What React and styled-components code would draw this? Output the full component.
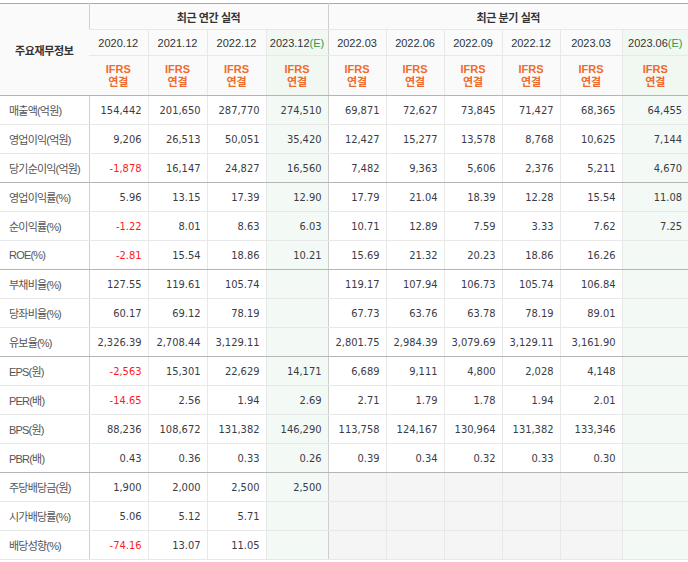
import React from "react"
import styled, {createGlobalStyle} from "styled-components";

const GlobalStyle = createGlobalStyle`
  html, body {
    margin: 0;
    padding: 0;
    background: #fff;
  }
  body {
    font-family: "DejaVu Sans Condensed", "Liberation Sans", "Noto Sans CJK KR", sans-serif;
  }
`

const KR = `"Liberation Sans", "Noto Sans CJK KR", sans-serif`

const Wrap = styled.div`
  padding-top: 3px;
  width: 688px;
`

const Table = styled.table`
  width: 688px;
  table-layout: fixed;
  border-collapse: collapse;
  border-top: 1px solid #a9a9a9;
  border-bottom: 1px solid #b5b5b5;
`

const Th = styled.th`
  height: ${(p) => p.$h || 25}px;
  padding: 0;
  background: ${(p) => (p.$est ? "#f1f8f2" : "#fafafa")};
  border-bottom: 1px solid ${(p) => (p.$last ? "#b5b5b5" : "#e8e8e8")};
  border-left: 1px solid ${(p) => (p.$strong ? "#cfcfcf" : "#e8e8e8")};
  font-family: ${KR};
  font-size: 11px;
  font-weight: ${(p) => (p.$bold ? 700 : 400)};
  letter-spacing: ${(p) => (p.$bold ? "-0.4px" : "0")};
  color: #333;
  text-align: center;
  vertical-align: middle;
  &:first-child {
    border-left: none;
  }
`

const Est = styled.span`
  color: #2f9a4f;
`

const Ifrs = styled.div`
  font-family: ${KR};
  font-size: 11px;
  font-weight: 700;
  line-height: 13px;
  color: #f06a2b;
`

const Row = styled.tr`
  height: 29px;
  td, th {
    border-bottom: 1px solid ${(p) => (p.$sep ? "#b5b5b5" : "#e8e8e8")};
  }
`

const Label = styled.th`
  padding: 0 0 0 9px;
  text-align: left;
  font-family: ${KR};
  font-size: 11px;
  font-weight: 400;
  letter-spacing: -0.8px;
  color: #555;
  background: #fff;
  white-space: nowrap;
`

const Cell = styled.td`
  padding: 0 6px 0 0;
  text-align: right;
  font-size: 11px;
  color: ${(p) => (p.$neg ? "#ff1a1a" : "#3b3b45")};
  background: ${(p) => (p.$est ? "#f3f9f4" : p.$empty ? "#f5f5f5" : "#fff")};
  border-left: 1px solid ${(p) => (p.$strong ? "#cfcfcf" : "#e8e8e8")};
  white-space: nowrap;
`

const annualCols = ["2020.12", "2021.12", "2022.12", "2023.12"]
const quarterCols = ["2022.03", "2022.06", "2022.09", "2022.12", "2023.03", "2023.06"]
const widths = [89, 59, 59, 59, 62, 58, 58, 58, 58, 62, 66]

const rows = [
    ["매출액(억원)", ["154,442", "201,650", "287,770", "274,510"], ["69,871", "72,627", "73,845", "71,427", "68,365", "64,455"]],
    ["영업이익(억원)", ["9,206", "26,513", "50,051", "35,420"], ["12,427", "15,277", "13,578", "8,768", "10,625", "7,144"]],
    ["당기순이익(억원)", ["-1,878", "16,147", "24,827", "16,560"], ["7,482", "9,363", "5,606", "2,376", "5,211", "4,670"], true],
    ["영업이익률(%)", ["5.96", "13.15", "17.39", "12.90"], ["17.79", "21.04", "18.39", "12.28", "15.54", "11.08"]],
    ["순이익률(%)", ["-1.22", "8.01", "8.63", "6.03"], ["10.71", "12.89", "7.59", "3.33", "7.62", "7.25"]],
    ["ROE(%)", ["-2.81", "15.54", "18.86", "10.21"], ["15.69", "21.32", "20.23", "18.86", "16.26", ""], true],
    ["부채비율(%)", ["127.55", "119.61", "105.74", ""], ["119.17", "107.94", "106.73", "105.74", "106.84", ""]],
    ["당좌비율(%)", ["60.17", "69.12", "78.19", ""], ["67.73", "63.76", "63.78", "78.19", "89.01", ""]],
    ["유보율(%)", ["2,326.39", "2,708.44", "3,129.11", ""], ["2,801.75", "2,984.39", "3,079.69", "3,129.11", "3,161.90", ""], true],
    ["EPS(원)", ["-2,563", "15,301", "22,629", "14,171"], ["6,689", "9,111", "4,800", "2,028", "4,148", ""]],
    ["PER(배)", ["-14.65", "2.56", "1.94", "2.69"], ["2.71", "1.79", "1.78", "1.94", "2.01", ""]],
    ["BPS(원)", ["88,236", "108,672", "131,382", "146,290"], ["113,758", "124,167", "130,964", "131,382", "133,346", ""]],
    ["PBR(배)", ["0.43", "0.36", "0.33", "0.26"], ["0.39", "0.34", "0.32", "0.33", "0.30", ""], true],
    ["주당배당금(원)", ["1,900", "2,000", "2,500", "2,500"], null],
    ["시가배당률(%)", ["5.06", "5.12", "5.71", ""], null],
    ["배당성향(%)", ["-74.16", "13.07", "11.05", ""], null],
]

const App = () => {
    return (
        <Wrap>
            <GlobalStyle/>
            <Table>
                <colgroup>
                    {widths.map((w, i) => <col key={i} style={{width: w}}/>)}
                </colgroup>
                <thead>
                <tr>
                    <Th rowSpan={3} $bold $last>주요재무정보</Th>
                    <Th colSpan={4} $bold $strong>최근 연간 실적</Th>
                    <Th colSpan={6} $bold $strong>최근 분기 실적</Th>
                </tr>
                <tr>
                    {annualCols.map((c, i) => (
                        <Th key={c} $est={i === 3} $strong={i === 0}>
                            {c}{i === 3 && <Est>(E)</Est>}
                        </Th>
                    ))}
                    {quarterCols.map((c, i) => (
                        <Th key={c} $est={i === 5} $strong={i === 0}>
                            {c}{i === 5 && <Est>(E)</Est>}
                        </Th>
                    ))}
                </tr>
                <tr>
                    {[...annualCols, ...quarterCols].map((c, i) => (
                        <Th key={i} $h={39} $last $est={i === 3 || i === 9} $strong={i === 0 || i === 4}>
                            <Ifrs>IFRS<br/>연결</Ifrs>
                        </Th>
                    ))}
                </tr>
                </thead>
                <tbody>
                {rows.map(([label, annual, quarter, sep]) => (
                    <Row key={label} $sep={sep}>
                        <Label>{label}</Label>
                        {annual.map((v, i) => (
                            <Cell key={i} $est={i === 3} $strong={i === 0} $neg={v.startsWith("-")}>{v}</Cell>
                        ))}
                        {(quarter || ["", "", "", "", "", ""]).map((v, i) => (
                            <Cell key={"q" + i} $est={i === 5} $empty={!quarter}
                                  $strong={i === 0} $neg={v.startsWith("-")}>{v}</Cell>
                        ))}
                    </Row>
                ))}
                </tbody>
            </Table>
        </Wrap>
    )
}

export default App
